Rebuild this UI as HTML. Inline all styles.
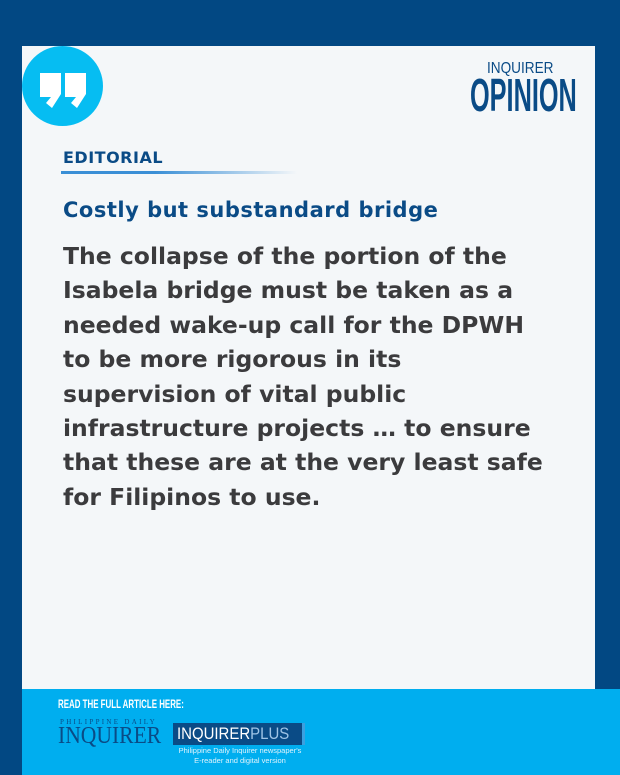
<!DOCTYPE html>
<html><head><style>
body{margin:0;width:620px;height:775px;background:#024883;position:relative;overflow:hidden;font-family:"Liberation Sans",sans-serif}
.card{position:absolute;left:22px;top:46px;width:573px;height:643px;background:#f4f7f9}
.circ{position:absolute;left:22px;top:46px;width:81px;height:80px;border-radius:50%;background:#06bdf2}
.logo1{position:absolute;left:487px;top:60px;color:#0a4b86;font:16px "Liberation Sans",sans-serif;transform:scaleX(.85);transform-origin:left;white-space:nowrap}
.logo2{position:absolute;left:470px;top:72px;color:#0a4b86;font:bold 46px/1 "Liberation Sans",sans-serif;transform:scaleX(.55);transform-origin:left;white-space:nowrap}
.ed{position:absolute;left:63px;top:148px;color:#0a4b86;font:bold 16px "DejaVu Sans",sans-serif;letter-spacing:.5px}
.line{position:absolute;left:61px;top:171px;width:236px;height:3px;background:linear-gradient(90deg,#3a8fd6,#3a8fd6 40%,#f4f7f9)}
.hd{position:absolute;left:63px;top:198px;color:#0a4b86;font:bold 21px "DejaVu Sans",sans-serif;letter-spacing:.5px;white-space:nowrap}
.body{position:absolute;left:63px;top:239px;color:#3b3b3d;font:bold 23.5px/34.4px "DejaVu Sans",sans-serif;letter-spacing:0;white-space:nowrap}
.band{position:absolute;left:22px;top:689px;width:598px;height:86px;background:#00aeef}
.read{position:absolute;left:58px;top:697px;color:#fff;font:bold 12px "Liberation Sans",sans-serif;transform:scaleX(.66);transform-origin:left;white-space:nowrap}
.pd{position:absolute;left:60px;top:718px;color:#0a4b86;font:7px "Liberation Serif",serif;letter-spacing:2.3px}
.inq{position:absolute;left:58px;top:724px;color:#0a4b86;font:24px/1 "Liberation Serif",serif;transform:scaleX(.9);transform-origin:left}
.plus{position:absolute;left:173px;top:723px;width:132px;height:22px;background:#0a4b86;border-right:3px solid #3aa0e0;color:#fff;font:17px/22px "Liberation Sans",sans-serif;padding-left:4px;box-sizing:border-box;white-space:nowrap;overflow:hidden}
.plus div{transform:scaleX(.88);transform-origin:left}
.plus span{color:#9fc4e6}
.cap{position:absolute;left:170px;top:746px;width:140px;text-align:center;color:#dff3fc;font:7.5px/10px "Liberation Sans",sans-serif}
</style></head><body>
<div class="card"></div>
<div class="circ"></div>
<svg style="position:absolute;left:0;top:0" width="120" height="130"><g fill="#fff">
<polygon points="40,73 61,73 61,94 52,108 46,103 51,97 40,97"/>
<polygon points="65,73 86,73 86,94 77,108 71,103 76,97 65,97"/></g></svg>
<div class="logo1">INQUIRER</div>
<div class="logo2">OPINION</div>
<div class="ed">EDITORIAL</div>
<div class="line"></div>
<div class="hd">Costly but substandard bridge</div>
<div class="body">The collapse of the portion of the<br>Isabela bridge must be taken as a<br>needed wake-up call for the DPWH<br>to be more rigorous in its<br>supervision of vital public<br>infrastructure projects … to ensure<br>that these are at the very least safe<br>for Filipinos to use.</div>
<div class="band"></div>
<div class="read">READ THE FULL ARTICLE HERE:</div>
<div class="pd">PHILIPPINE DAILY</div>
<div class="inq">INQUIRER</div>
<div class="plus"><div>INQUIRER<span>PLUS</span></div></div>
<div class="cap">Philippine Daily Inquirer newspaper's<br>E-reader and digital version</div>
</body></html>
